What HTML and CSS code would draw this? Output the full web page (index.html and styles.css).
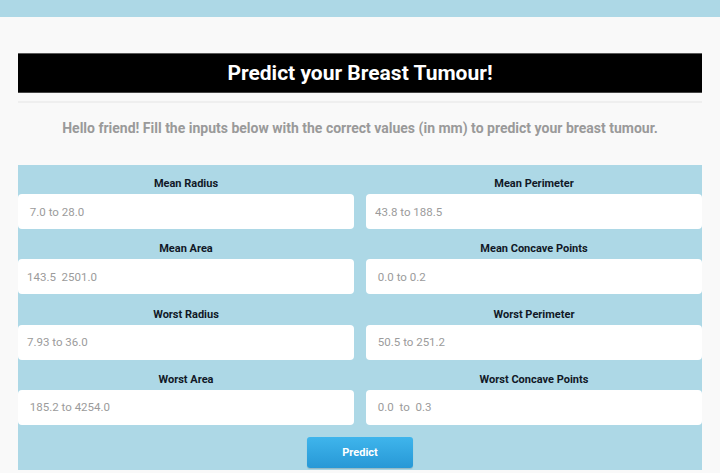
FILE: index.html
```html
<!DOCTYPE html>
<html>
<head>
<meta charset="utf-8">
<link rel="stylesheet" href="styles.css">
</head>
<body>
<div class="topbar"></div>
<main class="page">
  <h1 class="title">Predict your Breast Tumour!</h1>
  <hr class="rule">
  <p class="intro">Hello friend! Fill the inputs below with the correct values (in mm) to predict your breast tumour.</p>
  <form class="form">
    <div class="grid">
      <div class="field"><label class="label">Mean Radius</label><input class="input" placeholder=" 7.0 to 28.0"></div>
      <div class="field"><label class="label">Mean Perimeter</label><input class="input" placeholder="43.8 to 188.5"></div>
      <div class="field"><label class="label">Mean Area</label><input class="input" placeholder="143.5  2501.0"></div>
      <div class="field"><label class="label">Mean Concave Points</label><input class="input" placeholder=" 0.0 to 0.2"></div>
      <div class="field"><label class="label">Worst Radius</label><input class="input" placeholder="7.93 to 36.0"></div>
      <div class="field"><label class="label">Worst Perimeter</label><input class="input" placeholder=" 50.5 to 251.2"></div>
      <div class="field"><label class="label">Worst Area</label><input class="input" placeholder=" 185.2 to 4254.0"></div>
      <div class="field"><label class="label">Worst Concave Points</label><input class="input" placeholder=" 0.0  to  0.3"></div>
    </div>
    <div class="actions"><button type="button" class="btn">Predict</button></div>
  </form>
</main>
</body>
</html>
```

FILE: styles.css
```css
* { box-sizing: border-box; }
html, body { margin: 0; padding: 0; }
body {
  background: #f9f9f9;
  font-family: Roboto, "Liberation Sans", sans-serif;
  height: 473px;
  overflow: hidden;
}
.topbar {
  height: 17px;
  background: #add8e6;
}
.page {
  padding: 36px 18px 0;
}
.title {
  margin: 0;
  height: 40px;
  background: #000;
  border-top: 1px solid #5a5a5a;
  border-bottom: 1px solid #444;
  color: #fff;
  font-size: 21px;
  font-weight: 700;
  line-height: 38px;
  text-align: center;
}
.rule {
  margin: 8px 0 0;
  border: 0;
  border-top: 2px solid #efefef;
}
.intro {
  margin: 16px 0 0;
  color: #9a9a9a;
  font-size: 14px;
  font-weight: 700;
  text-align: center;
  line-height: 18px;
}
.form {
  margin-top: 28px;
  background: #add8e6;
  padding: 10px 0 2px;
}
.grid {
  display: grid;
  grid-template-columns: 1fr 1fr;
  column-gap: 12px;
  row-gap: 11.3px;
}
.field {
  display: flex;
  flex-direction: column;
}
.label {
  display: block;
  text-align: center;
  font-size: 11px;
  font-weight: 700;
  color: #111827;
  line-height: 18px;
  margin-bottom: 1px;
}
.input {
  height: 35px;
  border: 0;
  border-radius: 4px;
  background: #fff;
  padding: 0 9px;
  font-family: Roboto, "Liberation Sans", sans-serif;
  font-size: 11.5px;
  color: #333;
  outline: none;
}
.input::placeholder { color: #9b9b9b; }
.actions {
  display: flex;
  justify-content: center;
  margin-top: 12px;
}
.btn {
  width: 106px;
  height: 31px;
  border: 0;
  border-radius: 3px;
  background: linear-gradient(#3fb5ec, #2798d6);
  color: #fff;
  font-family: Roboto, "Liberation Sans", sans-serif;
  font-size: 11px;
  font-weight: 700;
  box-shadow: 0 1px 1px rgba(0,0,0,0.15);
}
```
